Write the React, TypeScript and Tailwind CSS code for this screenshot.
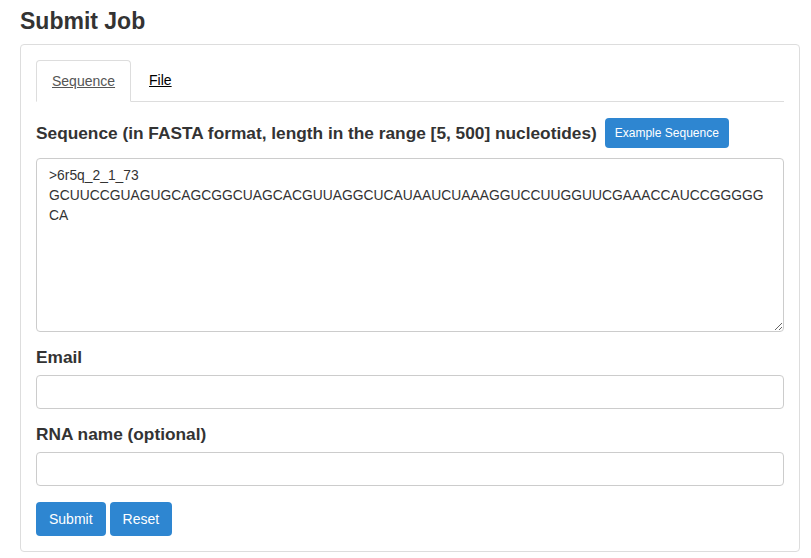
import React from 'react';

export default function App() {
  const seq = `>6r5q_2_1_73
GCUUCCGUAGUGCAGCGGCUAGCACGUUAGGCUCAUAAUCUAAAGGUCCUUGGUUCGAAACCAUCCGGGGGCA`;

  return (
    <div className="min-h-screen bg-white px-5 font-['Liberation_Sans',Arial,sans-serif] text-[#333]">
      <h3 className="pt-[8px] pb-[9px] text-[23px] font-bold leading-[27px]">Submit Job</h3>

      {/* Panel */}
      <div className="w-[780px] rounded border border-[#ddd] px-[15px] pt-[15px] pb-[15px]">
        {/* Tabs */}
        <div className="flex border-b border-[#ddd] text-[14px]">
          <a className="-mb-px rounded-t border border-[#ddd] border-b-white bg-white px-[15px] py-[10px] leading-[20px] text-[#555] underline">
            Sequence
          </a>
          <a className="px-[18px] py-[10px] leading-[20px] text-black underline">File</a>
        </div>

        <form className="pt-[16px]">
          <div className="flex items-center gap-[8px]">
            <label className="text-[17.3px] font-bold leading-[22px]">
              Sequence (in FASTA format, length in the range [5, 500] nucleotides)
            </label>
            <button type="button" className="h-[30px] rounded bg-[#2e86d1] px-[10px] text-[12px] text-white">
              Example Sequence
            </button>
          </div>
          <textarea
            defaultValue={seq}
            className="mt-[10px] block h-[174px] w-[748px] rounded border border-[#ccc] pl-[12px] pr-[14px] py-[6px] text-[13.85px] leading-[20px] text-[#333] break-all"
          />

          <label className="mt-[14px] block text-[17.3px] font-bold leading-[22px]">Email</label>
          <input className="mt-[7px] block h-[34px] w-[748px] rounded border border-[#ccc] px-[12px]" />

          <label className="mt-[14px] block text-[17.3px] font-bold leading-[22px]">RNA name (optional)</label>
          <input className="mt-[7px] block h-[34px] w-[748px] rounded border border-[#ccc] px-[12px]" />

          <div className="mt-[16px] flex gap-[4px]">
            <button type="submit" className="h-[34px] rounded bg-[#2e86d1] px-[13px] text-[14px] text-white">
              Submit
            </button>
            <button type="reset" className="h-[34px] rounded bg-[#2e86d1] px-[13px] text-[14px] text-white">
              Reset
            </button>
          </div>
        </form>
      </div>
    </div>
  );
}
